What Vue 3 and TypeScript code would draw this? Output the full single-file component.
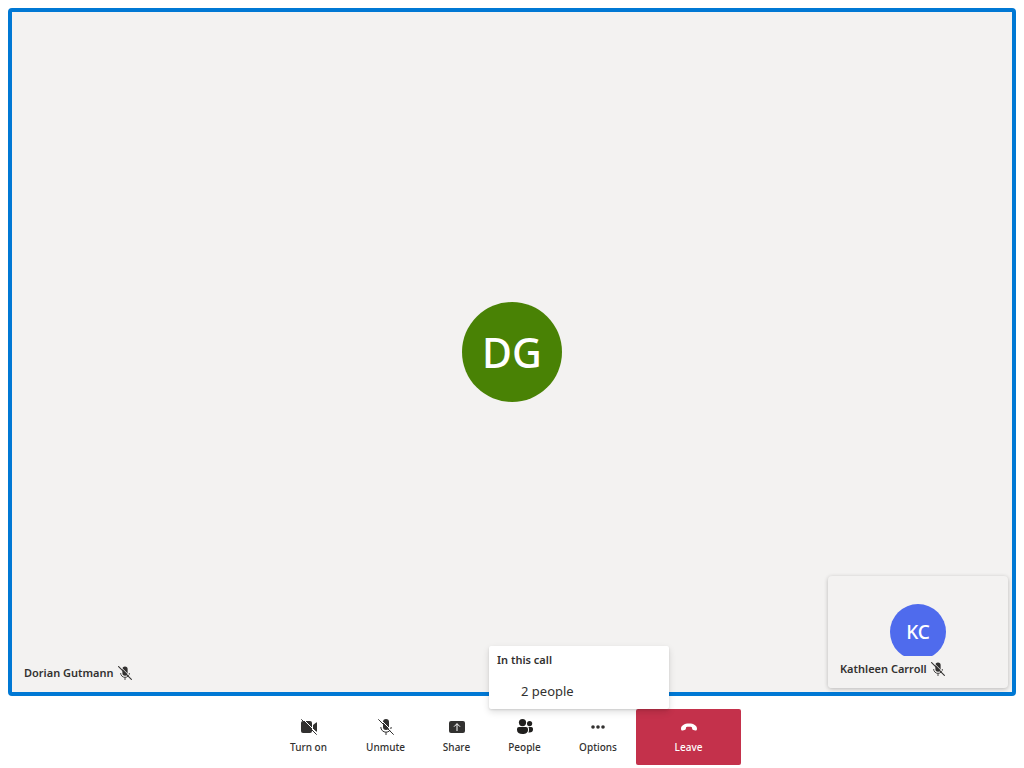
<script setup lang="ts">
import { ref } from 'vue'

interface Control {
  id: string
  label: string
}

const controls: Control[] = [
  { id: 'camera', label: 'Turn on' },
  { id: 'mic', label: 'Unmute' },
  { id: 'share', label: 'Share' },
  { id: 'people', label: 'People' },
  { id: 'options', label: 'Options' },
  { id: 'leave', label: 'Leave' },
]

const peopleCount = 2
const peopleOpen = ref(true)

function activate(id: string) {
  if (id === 'people') peopleOpen.value = !peopleOpen.value
}
</script>

<template>
  <div class="call">
    <main class="stage">
      <div class="avatar avatar-large">DG</div>
      <div class="name">
        <span>Dorian Gutmann</span>
        <svg class="muted" viewBox="0 0 16 16" aria-hidden="true">
          <rect x="5" y="0.5" width="6" height="10.5" rx="3" fill="currentColor" />
          <path d="M3 8a5 5 0 0 0 10 0M8 13v3" fill="none" stroke="currentColor" />
          <path d="M1.5 -.5 16.5 14.5" stroke="#f3f2f1" />
          <path d="M.3.3 15.7 15.7" stroke="currentColor" stroke-width="1.200" />
        </svg>
      </div>
      <section class="tile">
        <div class="avatar avatar-small">KC</div>
        <div class="name tile-name">
          <span>Kathleen Carroll</span>
          <svg class="muted" viewBox="0 0 16 16" aria-hidden="true">
            <rect x="5" y="0.5" width="6" height="10.5" rx="3" fill="currentColor" />
            <path d="M3 8a5 5 0 0 0 10 0M8 13v3" fill="none" stroke="currentColor" />
            <path d="M1.5 -.5 16.5 14.5" stroke="#f3f2f1" />
            <path d="M.3.3 15.7 15.7" stroke="currentColor" stroke-width="1.200" />
          </svg>
        </div>
      </section>
    </main>

    <footer class="bar">
      <div v-for="c in controls" :key="c.id" class="slot" :class="c.id">
        <button class="control" type="button" @click="activate(c.id)">
          <svg class="icon" viewBox="0 0 16 16" aria-hidden="true">
            <template v-if="c.id === 'camera'">
              <rect x="0" y="2" width="11" height="12" rx="2" fill="currentColor" />
              <path d="M12 6 15.2 3.4Q16 3 16 4V12Q16 13 15.2 12.6L12 10Z" fill="currentColor" />
              <path d="M1.5 -.5 16.5 14.5" stroke="#fff" />
              <path d="M.3.3 15.7 15.7" stroke="currentColor" />
            </template>
            <template v-else-if="c.id === 'mic'">
              <rect x="5" y="0" width="6" height="11" rx="3" fill="currentColor" />
              <path d="M2.8 8a5.2 5.2 0 0 0 10.4 0M8 13.2V16" fill="none" stroke="currentColor" />
              <path d="M1.5 -.5 16.5 14.5" stroke="#fff" />
              <path d="M.3.3 15.7 15.7" stroke="currentColor" />
            </template>
            <template v-else-if="c.id === 'share'">
              <rect x="0" y="2" width="16" height="12" rx="2" fill="currentColor" />
              <path d="M8 12V4.700M5 7.700l3-3 3 3" fill="none" stroke="#fff" />
            </template>
            <template v-else-if="c.id === 'people'">
              <circle cx="5.5" cy="3.6" r="3.6" fill="currentColor" />
              <circle cx="12.6" cy="4.6" r="2.6" fill="currentColor" />
              <path d="M2 8h7q2 0 2 2v1c0 2.500-2.200 4-5.500 4S0 13.500 0 11v-1q0-2 2-2Z" fill="currentColor" />
              <path d="M11.400 8H14.300Q16 8 16 9.700V10.500C16 12.600 14.300 14 11.400 13.500Q12 12.500 12 11V10Q12 9 11.400 8Z" fill="currentColor" />
            </template>
            <template v-else-if="c.id === 'options'">
              <circle cx="3" cy="8" r="1.8" fill="currentColor" />
              <circle cx="8" cy="8" r="1.8" fill="currentColor" />
              <circle cx="13" cy="8" r="1.8" fill="currentColor" />
            </template>
            <template v-else>
              <path d="M8 4.500c4.600 0 8 2 8 5.200 0 1.300-.6 1.900-1.700 1.700l-1.900-.4c-.8-.2-1.200-.6-1.300-1.400l-.2-1.300C9.600 7.700 6.400 7.700 5.100 8.300l-.2 1.300c-.1.800-.5 1.200-1.300 1.400l-1.900.4C.6 11.600 0 11 0 9.700 0 6.500 3.400 4.500 8 4.500Z" fill="currentColor" />
            </template>
          </svg>
          <span>{{ c.label }}</span>
        </button>
        <div v-if="c.id === 'people' && peopleOpen" class="menu">
          <h2 class="menu-title">In this call</h2>
          <button class="menu-item" type="button">{{ peopleCount }} people</button>
        </div>
      </div>
    </footer>
  </div>
</template>

<style>
body {
  margin: 0;
}
</style>

<style scoped>
.call {
  box-sizing: border-box;
  display: flex;
  flex-direction: column;
  height: 100vh;
  padding: 8px 8px 3px;
  gap: 13px;
  background: #fff;
  color: #323130;
  font-family: "Segoe UI", "Noto Sans", sans-serif;
}

.stage {
  position: relative;
  flex: 1;
  display: flex;
  align-items: center;
  justify-content: center;
  border: 4px solid #0078d4;
  border-radius: 4px;
  background: #f3f2f1;
}

.avatar {
  display: flex;
  align-items: center;
  justify-content: center;
  border-radius: 50%;
  color: #fff;
  font-weight: 500;
}

.avatar-large {
  width: 100px;
  height: 100px;
  background: #498205;
  font-size: 41px;
}

.avatar-small {
  width: 56px;
  height: 56px;
  background: #4f6bed;
  font-size: 19px;
}

.name {
  position: absolute;
  left: 0;
  bottom: 0;
  display: flex;
  align-items: center;
  gap: 4px;
  padding: 8px 12px 11px;
  font-size: 11px;
  font-weight: 600;
  line-height: 16px;
}

.muted {
  width: 14px;
  height: 14px;
}

.tile {
  position: absolute;
  right: 4px;
  bottom: 4px;
  display: flex;
  align-items: center;
  justify-content: center;
  width: 180px;
  height: 112px;
  border-radius: 4px;
  background: #f3f2f1;
  box-shadow: 0 1px 4px rgba(0, 0, 0, 0.24);
}

.tile-name {
  padding-top: 5px;
  border-radius: 4px;
  background: #f3f2f1;
}

.bar {
  display: flex;
  justify-content: center;
  height: 56px;
  padding-right: 13px;
}

.slot {
  position: relative;
  width: 77px;
}

.share {
  width: 65px;
}

.people {
  width: 71px;
}

.options {
  width: 76px;
}

.leave {
  width: 105px;
}

.control {
  display: flex;
  flex-direction: column;
  align-items: center;
  gap: 4px;
  width: 100%;
  height: 100%;
  padding: 10px 0 0;
  border: 0;
  border-radius: 2px;
  background: transparent;
  color: #323130;
  font-family: inherit;
  font-size: 10px;
  font-weight: 500;
  line-height: 16px;
  white-space: nowrap;
  cursor: pointer;
}

.leave .control {
  background: #c4314b;
  color: #fff;
}

.people .icon {
  color: #201f1e;
}

.icon {
  width: 16px;
  height: 16px;
}

.menu {
  position: absolute;
  left: 0;
  bottom: 100%;
  z-index: 1;
  box-sizing: border-box;
  width: 180px;
  border-radius: 2px;
  background: #fff;
  box-shadow: 0 3px 7px rgba(0, 0, 0, 0.13), 0 1px 2px rgba(0, 0, 0, 0.11);
}

.menu-title {
  margin: 0;
  padding: 0 8px;
  font-size: 11px;
  font-weight: 600;
  line-height: 27px;
}

.menu-item {
  display: block;
  width: 100%;
  height: 36px;
  padding: 0 32px;
  border: 0;
  background: transparent;
  color: #323130;
  font-family: inherit;
  font-size: 13px;
  line-height: 36px;
  text-align: left;
  cursor: pointer;
}
</style>
